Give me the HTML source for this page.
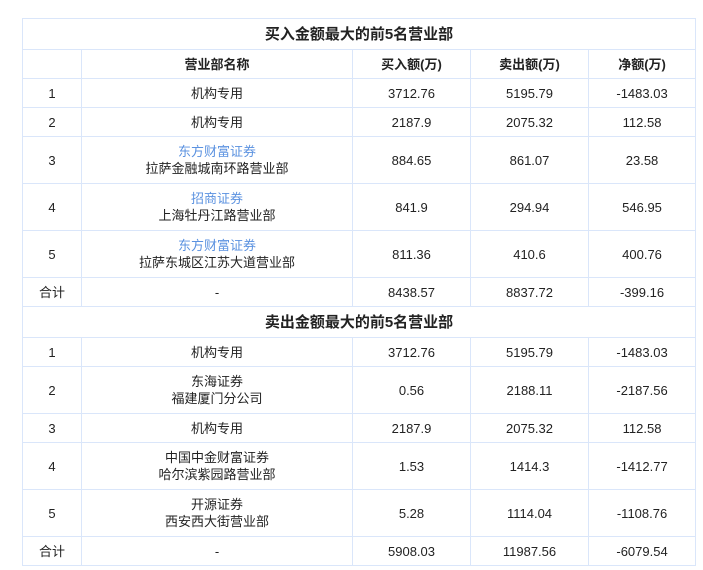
<!DOCTYPE html>
<html><head><meta charset="utf-8"><style>
body{margin:0;background:#fff;font-family:"Liberation Sans","Noto Sans CJK SC",sans-serif;color:#222;}
table{position:absolute;left:22px;top:18px;border-collapse:collapse;width:673px;table-layout:fixed;font-size:13px;}
td,th{border:1px solid #dae6fa;text-align:center;padding:0;line-height:17px;}
th{font-weight:bold;}
.t{font-size:15px;font-weight:bold;height:30px;}
.h{height:29px}
.r{height:29px}
.r2{height:47px}
.b{color:#5b92e0}
</style></head><body>
<table>
<colgroup><col style="width:59px"><col style="width:271px"><col style="width:118px"><col style="width:118px"><col style="width:107px"></colgroup>
<tr><td colspan="5" class="t">买入金额最大的前5名营业部</td></tr>
<tr class="h"><th></th><th>营业部名称</th><th>买入额(万)</th><th>卖出额(万)</th><th>净额(万)</th></tr>
<tr class="r"><td>1</td><td>机构专用</td><td>3712.76</td><td>5195.79</td><td>-1483.03</td></tr>
<tr class="r"><td>2</td><td>机构专用</td><td>2187.9</td><td>2075.32</td><td>112.58</td></tr>
<tr class="r2"><td>3</td><td><span class="b">东方财富证券</span><br>拉萨金融城南环路营业部</td><td>884.65</td><td>861.07</td><td>23.58</td></tr>
<tr class="r2"><td>4</td><td><span class="b">招商证券</span><br>上海牡丹江路营业部</td><td>841.9</td><td>294.94</td><td>546.95</td></tr>
<tr class="r2"><td>5</td><td><span class="b">东方财富证券</span><br>拉萨东城区江苏大道营业部</td><td>811.36</td><td>410.6</td><td>400.76</td></tr>
<tr class="r"><td>合计</td><td>-</td><td>8438.57</td><td>8837.72</td><td>-399.16</td></tr>
<tr><td colspan="5" class="t">卖出金额最大的前5名营业部</td></tr>
<tr class="r"><td>1</td><td>机构专用</td><td>3712.76</td><td>5195.79</td><td>-1483.03</td></tr>
<tr class="r2"><td>2</td><td>东海证券<br>福建厦门分公司</td><td>0.56</td><td>2188.11</td><td>-2187.56</td></tr>
<tr class="r"><td>3</td><td>机构专用</td><td>2187.9</td><td>2075.32</td><td>112.58</td></tr>
<tr class="r2"><td>4</td><td>中国中金财富证券<br>哈尔滨紫园路营业部</td><td>1.53</td><td>1414.3</td><td>-1412.77</td></tr>
<tr class="r2"><td>5</td><td>开源证券<br>西安西大街营业部</td><td>5.28</td><td>1114.04</td><td>-1108.76</td></tr>
<tr class="r"><td>合计</td><td>-</td><td>5908.03</td><td>11987.56</td><td>-6079.54</td></tr>
</table>
</body></html>
